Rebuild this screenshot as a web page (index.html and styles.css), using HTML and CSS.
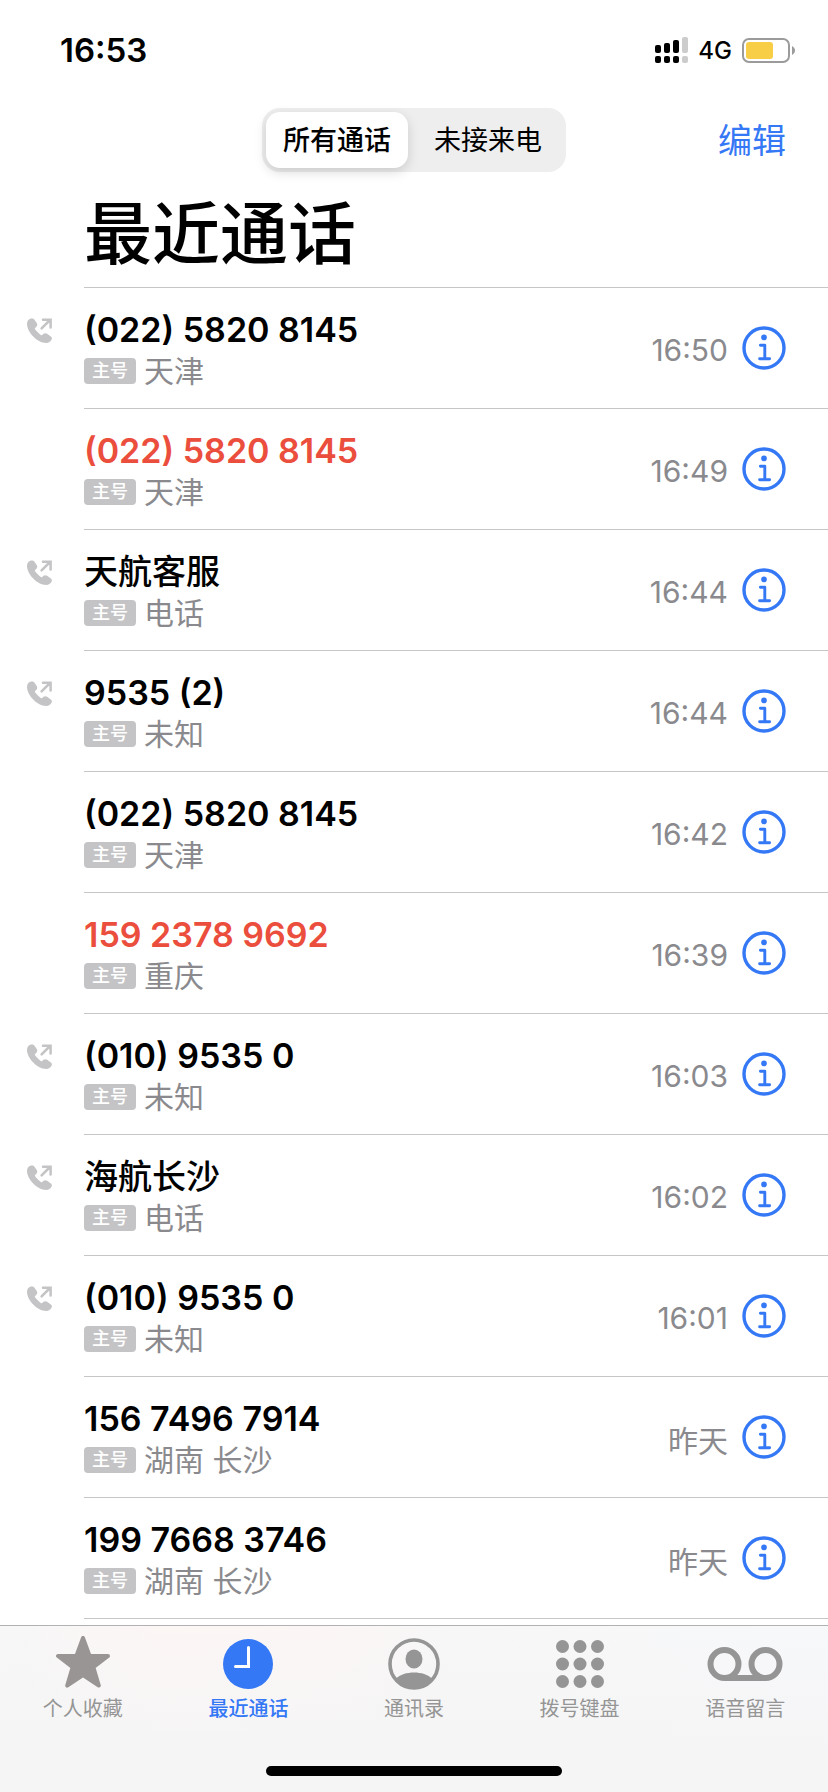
FILE: index.html
```html
<!DOCTYPE html>
<html lang="zh-CN">
<head>
  <meta charset="UTF-8" />
  <meta name="viewport" content="width=device-width, initial-scale=1.0" />
  <title>最近通话</title>
  <link rel="stylesheet" href="styles.css">
</head>
<body>
  <svg class="sprite" aria-hidden="true">
    <symbol id="icon-outgoing" viewBox="0 0 25 25">
      <path d="M3.200 .800C1.500 1.300 0 3.400 0 5.800C0 14.500 10.500 25 19.200 25C21.600 25 23.600 23.700 24.500 21.800C25.200 20.400 25 19.400 23.800 18.500L20.200 15.800C18.900 14.900 17.500 14.900 16.500 15.800L15.200 17C14.700 17.400 14.300 17.300 13.800 17C11.800 15.700 9.400 13.300 8.100 11.300C7.800 10.800 7.700 10.400 8.100 10L9.400 8.700C10.400 7.700 10.500 6.300 9.700 5L7.300 1.600C6.300 .300 4.800 .300 3.200 .800Z" fill="currentColor" />
      <path d="M14.600 10.400L23 2M16 1.700H23.600V9.600" fill="none" stroke="currentColor" stroke-width="2.500" stroke-linecap="round" />
    </symbol>
    <symbol id="icon-info" viewBox="0 0 44 44">
      <circle cx="22" cy="22" r="20" fill="none" stroke="currentColor" stroke-width="3.400" />
      <circle cx="22" cy="11.400" r="2.800" fill="currentColor" />
      <path d="M18.400 19.200H22.800V32.600M17.600 32.800H27.600" fill="none" stroke="currentColor" stroke-width="2.900" stroke-linecap="round" stroke-linejoin="round" />
    </symbol>
  </svg>

  <div class="phone">
    <div class="status-bar">
      <span class="clock">16:53</span>
      <div class="status-icons">
        <svg class="signal" viewBox="0 0 33 26">
          <g fill="#000">
            <rect x="0" y="8" width="6" height="8" rx="2" />
            <rect x="9" y="6" width="6" height="10" rx="2" />
            <rect x="18" y="3" width="6" height="13" rx="2" />
            <rect x="0" y="19" width="6" height="7" rx="2" />
            <rect x="9" y="19" width="6" height="7" rx="2" />
            <rect x="18" y="19" width="6" height="7" rx="2" />
          </g>
          <g fill="#ccc">
            <rect x="27" y="0" width="6" height="16" rx="2" />
            <rect x="27" y="19" width="6" height="7" rx="2" />
          </g>
        </svg>
        <span class="network">4G</span>
        <svg class="battery" viewBox="0 0 53 25">
          <rect x="1" y="1" width="46" height="23" rx="6" fill="none" stroke="#9b9b9b" stroke-width="2" />
          <rect x="4" y="4" width="27" height="17" rx="3" fill="#f7ce46" />
          <path d="M50 8C54 10 54 15 50 17Z" fill="#9b9b9b" />
        </svg>
      </div>
    </div>

    <header class="nav-bar">
      <div class="segmented">
        <button class="segment active" type="button">所有通话</button>
        <button class="segment" type="button">未接来电</button>
      </div>
      <button class="edit" type="button">编辑</button>
    </header>

    <main>
      <h1>最近通话</h1>

      <ul class="calls">
        <li class="call">
          <div class="direction"><svg><use href="#icon-outgoing" /></svg></div>
          <div class="call-body">
            <div class="caller">
              <div class="name">(022) 5820 8145</div>
              <div class="place"><span class="badge">主号</span>天津</div>
            </div>
            <span class="time">16:50</span>
            <button class="info" type="button" aria-label="详情"><svg><use href="#icon-info" /></svg></button>
          </div>
        </li>
        <li class="call missed">
          <div class="direction"></div>
          <div class="call-body">
            <div class="caller">
              <div class="name">(022) 5820 8145</div>
              <div class="place"><span class="badge">主号</span>天津</div>
            </div>
            <span class="time">16:49</span>
            <button class="info" type="button" aria-label="详情"><svg><use href="#icon-info" /></svg></button>
          </div>
        </li>
        <li class="call contact">
          <div class="direction"><svg><use href="#icon-outgoing" /></svg></div>
          <div class="call-body">
            <div class="caller">
              <div class="name">天航客服</div>
              <div class="place"><span class="badge">主号</span>电话</div>
            </div>
            <span class="time">16:44</span>
            <button class="info" type="button" aria-label="详情"><svg><use href="#icon-info" /></svg></button>
          </div>
        </li>
        <li class="call">
          <div class="direction"><svg><use href="#icon-outgoing" /></svg></div>
          <div class="call-body">
            <div class="caller">
              <div class="name">9535 (2)</div>
              <div class="place"><span class="badge">主号</span>未知</div>
            </div>
            <span class="time">16:44</span>
            <button class="info" type="button" aria-label="详情"><svg><use href="#icon-info" /></svg></button>
          </div>
        </li>
        <li class="call">
          <div class="direction"></div>
          <div class="call-body">
            <div class="caller">
              <div class="name">(022) 5820 8145</div>
              <div class="place"><span class="badge">主号</span>天津</div>
            </div>
            <span class="time">16:42</span>
            <button class="info" type="button" aria-label="详情"><svg><use href="#icon-info" /></svg></button>
          </div>
        </li>
        <li class="call missed">
          <div class="direction"></div>
          <div class="call-body">
            <div class="caller">
              <div class="name">159 2378 9692</div>
              <div class="place"><span class="badge">主号</span>重庆</div>
            </div>
            <span class="time">16:39</span>
            <button class="info" type="button" aria-label="详情"><svg><use href="#icon-info" /></svg></button>
          </div>
        </li>
        <li class="call">
          <div class="direction"><svg><use href="#icon-outgoing" /></svg></div>
          <div class="call-body">
            <div class="caller">
              <div class="name">(010) 9535 0</div>
              <div class="place"><span class="badge">主号</span>未知</div>
            </div>
            <span class="time">16:03</span>
            <button class="info" type="button" aria-label="详情"><svg><use href="#icon-info" /></svg></button>
          </div>
        </li>
        <li class="call contact">
          <div class="direction"><svg><use href="#icon-outgoing" /></svg></div>
          <div class="call-body">
            <div class="caller">
              <div class="name">海航长沙</div>
              <div class="place"><span class="badge">主号</span>电话</div>
            </div>
            <span class="time">16:02</span>
            <button class="info" type="button" aria-label="详情"><svg><use href="#icon-info" /></svg></button>
          </div>
        </li>
        <li class="call">
          <div class="direction"><svg><use href="#icon-outgoing" /></svg></div>
          <div class="call-body">
            <div class="caller">
              <div class="name">(010) 9535 0</div>
              <div class="place"><span class="badge">主号</span>未知</div>
            </div>
            <span class="time">16:01</span>
            <button class="info" type="button" aria-label="详情"><svg><use href="#icon-info" /></svg></button>
          </div>
        </li>
        <li class="call">
          <div class="direction"></div>
          <div class="call-body">
            <div class="caller">
              <div class="name">156 7496 7914</div>
              <div class="place"><span class="badge">主号</span>湖南 长沙</div>
            </div>
            <span class="time">昨天</span>
            <button class="info" type="button" aria-label="详情"><svg><use href="#icon-info" /></svg></button>
          </div>
        </li>
        <li class="call">
          <div class="direction"></div>
          <div class="call-body">
            <div class="caller">
              <div class="name">199 7668 3746</div>
              <div class="place"><span class="badge">主号</span>湖南 长沙</div>
            </div>
            <span class="time">昨天</span>
            <button class="info" type="button" aria-label="详情"><svg><use href="#icon-info" /></svg></button>
          </div>
        </li>
      </ul>
    </main>

    <footer class="tab-bar">
      <nav class="tabs">
        <a class="tab" href="#">
          <svg viewBox="0 0 80 56">
            <path d="M40 2L46.600 20H65L50.400 31.200L55.800 49.600L40 39L24.200 49.600L29.600 31.200L15 20H33.400Z" fill="#999594" stroke="#999594" stroke-width="4" stroke-linejoin="round" />
          </svg>
          个人收藏
        </a>
        <a class="tab active" href="#">
          <svg viewBox="0 0 80 56">
            <circle cx="40" cy="28" r="25" fill="currentColor" />
            <path d="M40.500 11.500V30.500H27.500" fill="none" stroke="#fff" stroke-width="3" stroke-linecap="round" />
          </svg>
          最近通话
        </a>
        <a class="tab" href="#">
          <svg viewBox="0 0 80 56">
            <circle cx="40" cy="28" r="24" fill="none" stroke="currentColor" stroke-width="3.600" />
            <ellipse cx="40" cy="23" rx="8.500" ry="9.500" fill="currentColor" />
            <path d="M21.500 43C26 38.500 33 36.500 40 36.500S54 38.500 58.500 43C54 49.500 47 52.500 40 52.500S26 49.500 21.500 43Z" fill="currentColor" />
          </svg>
          通讯录
        </a>
        <a class="tab" href="#">
          <svg viewBox="0 0 80 56">
            <g fill="currentColor">
              <circle cx="22.500" cy="10.500" r="6.500" /><circle cx="40" cy="10.500" r="6.500" /><circle cx="57.500" cy="10.500" r="6.500" />
              <circle cx="22.500" cy="28" r="6.500" /><circle cx="40" cy="28" r="6.500" /><circle cx="57.500" cy="28" r="6.500" />
              <circle cx="22.500" cy="45.500" r="6.500" /><circle cx="40" cy="45.500" r="6.500" /><circle cx="57.500" cy="45.500" r="6.500" />
            </g>
          </svg>
          拨号键盘
        </a>
        <a class="tab" href="#">
          <svg viewBox="0 0 80 56">
            <g fill="none" stroke="currentColor" stroke-width="6">
              <circle cx="19.500" cy="28" r="14" />
              <circle cx="60.500" cy="28" r="14" />
              <path d="M19.500 42H60.500" />
            </g>
          </svg>
          语音留言
        </a>
      </nav>
      <div class="home-indicator"></div>
    </footer>
  </div>
</body>
</html>
```

FILE: styles.css
```css
* {
  box-sizing: border-box;
}
body {
  margin: 0;
  font-family: Inter, "Noto Sans CJK SC", sans-serif;
  background-color: #fff;
  color: #000;
}
button {
  padding: 0;
  border: none;
  background: none;
  font-family: inherit;
  color: inherit;
  cursor: pointer;
}
svg {
  display: block;
}
.sprite {
  display: none;
}
.phone {
  display: flex;
  flex-direction: column;
  min-height: 100vh;
}

/* status bar */
.status-bar {
  display: flex;
  justify-content: space-between;
  align-items: center;
  height: 100px;
  padding: 0 33px 0 60px;
}
.clock {
  font-size: 33px;
  font-weight: 600;
}
.status-icons {
  display: flex;
  align-items: center;
  gap: 10px;
}
.signal {
  width: 33px;
  height: 26px;
}
.network {
  font-size: 24px;
  font-weight: 500;
}
.battery {
  width: 53px;
  height: 25px;
}

/* top controls */
.nav-bar {
  display: grid;
  grid-template-columns: 1fr 304px 1fr;
  align-items: center;
  padding: 8px 42px 0;
}
.segmented {
  grid-column: 2;
  display: grid;
  grid-template-columns: 142px 1fr;
  gap: 6px;
  padding: 4px;
  border-radius: 18px;
  background-color: #eee;
}
.segment {
  height: 56px;
  padding-bottom: 4px;
  border-radius: 14px;
  font-size: 27px;
}
.segment.active {
  background-color: #fff;
  font-weight: 500;
  box-shadow: 0 4px 12px rgba(0, 0, 0, 0.15);
}
.edit {
  justify-self: end;
  padding-bottom: 4px;
  font-size: 34px;
  color: #3478f6;
}
h1 {
  margin: 0 0 0 84px;
  padding: 18px 0 9px;
  border-bottom: 1px solid #c6c6c8;
  font-size: 68px;
  font-weight: 500;
  line-height: 88px;
}

/* call list */
.calls {
  margin: 0;
  padding: 0;
  list-style: none;
}
.call {
  display: flex;
}
.direction {
  width: 84px;
  padding: 30px 0 0 27px;
  color: #c4c4c6;
}
.direction svg {
  width: 25px;
  height: 25px;
}
.call-body {
  flex: 1;
  display: flex;
  align-items: center;
  height: 121px;
  padding-right: 42px;
  border-bottom: 1px solid #c6c6c8;
}
.caller {
  flex: 1;
  padding-top: 4px;
}
.name {
  font-size: 34px;
  font-weight: 600;
  line-height: 42px;
}
.contact .name {
  font-weight: 500;
}
.missed .name {
  color: #eb4e3d;
}
.place {
  display: flex;
  align-items: center;
  gap: 8px;
  font-size: 30px;
  line-height: 40px;
  color: #8a8a8e;
}
.badge {
  width: 52px;
  border-radius: 4px;
  background-color: #c4c4c6;
  font-size: 18px;
  font-weight: 500;
  line-height: 26px;
  text-align: center;
  color: #fff;
}
.time {
  margin-right: 14px;
  padding-top: 4px;
  font-size: 30px;
  color: #8a8a8e;
}
.info {
  color: #3478f6;
}
.info svg {
  width: 44px;
  height: 44px;
}

/* bottom tabs */
.tab-bar {
  margin-top: auto;
  padding-bottom: 16px;
  border-top: 1px solid #b2b2b2;
  background: linear-gradient(to bottom, rgba(245, 245, 246, 0), #f5f5f6 80%), linear-gradient(to right, #f7f7f7, #fcf6f5 20%, #fbf6f5 40%, #f7f7f7 55%, #f7f8fa);
}
.tabs {
  display: grid;
  grid-template-columns: repeat(5, 1fr);
  padding-top: 10px;
}
.tab {
  display: flex;
  flex-direction: column;
  align-items: center;
  gap: 4px;
  font-size: 20px;
  line-height: 26px;
  text-decoration: none;
  color: #959595;
}
.tab.active {
  color: #3478f6;
  font-weight: 500;
}
.tab svg {
  width: 80px;
  height: 56px;
}
.home-indicator {
  width: 296px;
  height: 10px;
  margin: 44px auto 0;
  border-radius: 5px;
  background-color: #000;
}
```
